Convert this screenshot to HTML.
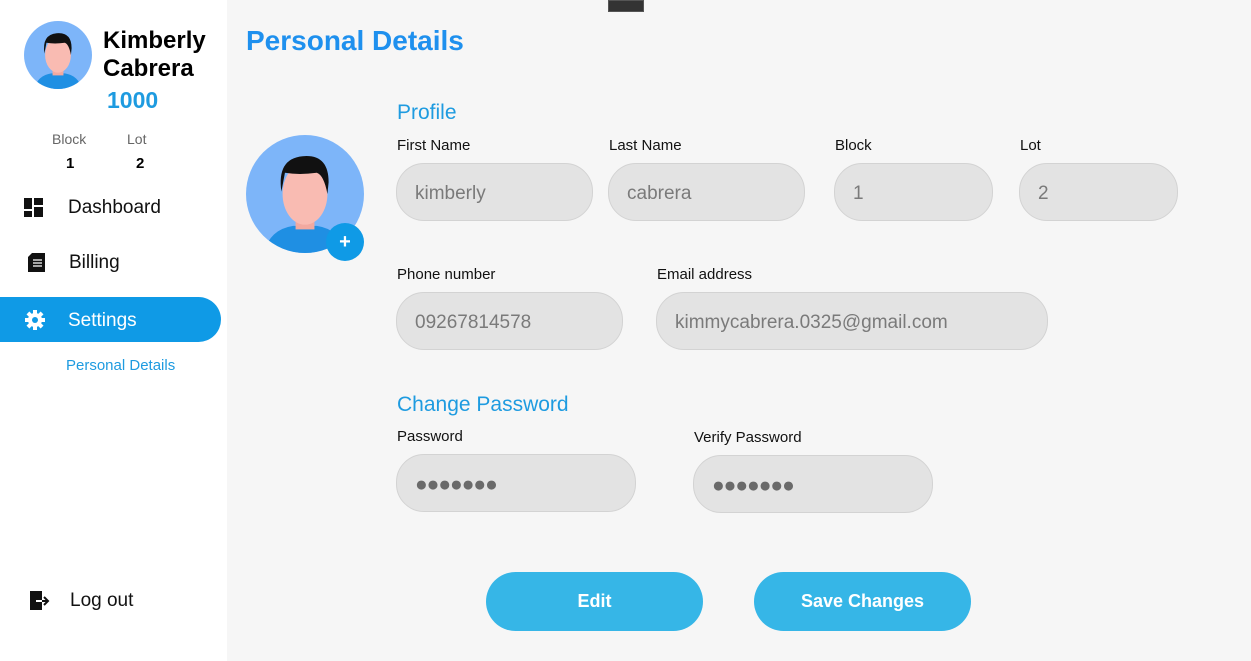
<!DOCTYPE html>
<html><head><meta charset="utf-8"><style>
*{margin:0;padding:0;box-sizing:border-box}
body{width:1251px;height:661px;overflow:hidden;background:#f6f6f6;font-family:"Liberation Sans",sans-serif;position:relative}
.side{position:absolute;left:0;top:0;width:227px;height:661px;background:#fff}
.a{position:absolute}
.inp{position:absolute;background:#e3e3e3;border:1px solid #d3d3d3;border-radius:28px;color:#7a7a7a;font-size:19px;padding-left:18px;padding-top:3px;display:flex;align-items:center}
.lbl{position:absolute;font-size:15px;color:#111}
.btn{position:absolute;background:#36b6e7;border-radius:30px;color:#fff;font-weight:bold;font-size:18px;display:flex;align-items:center;justify-content:center;width:217px;height:59px;top:572px}
.nav{position:absolute;font-size:19px;color:#111}
.dots{letter-spacing:-1px;color:#6a6a6a;font-size:21px}
</style></head><body>
<div class="side">
<svg class="a" style="left:24px;top:21px" width="68" height="68" viewBox="0 0 100 100"><defs><clipPath id="c1"><circle cx="50" cy="50" r="50"/></clipPath></defs><circle cx="50" cy="50" r="50" fill="#7db5f9"/><g clip-path="url(#c1)"><path d="M15 100 Q20 80 40 77 L60 77 Q80 80 85 100Z" fill="#1f8fe3"/><rect x="42" y="62" width="16" height="18" fill="#f2a9a0"/><ellipse cx="50" cy="50" rx="19" ry="26" fill="#f9bbb2"/><path d="M30 48 Q26 20 48 18 Q70 16 70 40 L69 50 Q66 34 60 32 Q45 34 33 32Z" fill="#111"/></g></svg>
<div class="a" style="left:103px;top:27px;font-size:24px;font-weight:bold;line-height:28px;color:#000">Kimberly<br>Cabrera</div>
<div class="a" style="left:107px;top:87px;font-size:23px;font-weight:bold;color:#1e9be0">1000</div>
<div class="a" style="left:52px;top:131px;font-size:14px;color:#666">Block</div>
<div class="a" style="left:127px;top:131px;font-size:14px;color:#666">Lot</div>
<div class="a" style="left:66px;top:155px;font-size:15px;font-weight:bold">1</div>
<div class="a" style="left:136px;top:155px;font-size:15px;font-weight:bold">2</div>
<svg class="a" style="left:24px;top:198px" width="19" height="19"><rect x="0" y="0" width="8" height="11" fill="#111"/><rect x="10" y="0" width="9" height="7" fill="#111"/><rect x="0" y="13" width="8" height="6" fill="#111"/><rect x="10" y="9" width="9" height="10" fill="#111"/></svg>
<div class="nav" style="left:68px;top:197px">Dashboard</div>
<svg class="a" style="left:27px;top:253px" width="19" height="19"><path d="M5 0H18V19H1V4Z" fill="#111"/><path d="M6 7h9M6 10h9M6 13h9" stroke="#fff" stroke-width="1.2"/></svg>
<div class="nav" style="left:69px;top:252px">Billing</div>
<div class="a" style="left:0;top:297px;width:221px;height:45px;background:#0f9ae6;border-radius:0 23px 23px 0"></div>
<svg class="a" style="left:25px;top:310px" width="20" height="20" viewBox="0 0 20 20"><g fill="#fff"><circle cx="10" cy="10" r="7"/><rect x="8" y="0" width="4" height="20"/><rect x="0" y="8" width="20" height="4"/><rect x="8" y="0" width="4" height="20" transform="rotate(45 10 10)"/><rect x="8" y="0" width="4" height="20" transform="rotate(-45 10 10)"/></g><circle cx="10" cy="10" r="3" fill="#0f9ae6"/></svg>
<div class="nav" style="left:68px;top:310px;color:#fff">Settings</div>
<div class="a" style="left:66px;top:357px;font-size:15px;color:#1e9be0">Personal Details</div>
<svg class="a" style="left:30px;top:591px" width="20" height="20"><rect x="0" y="0" width="12" height="19" fill="#111"/><path d="M8 10h10M14 6l4 4-4 4" stroke="#111" stroke-width="2" fill="none"/><path d="M6 10h6" stroke="#fff" stroke-width="2"/></svg>
<div class="nav" style="left:70px;top:590px">Log out</div>
</div>
<div class="a" style="left:608px;top:0;width:36px;height:12px;background:#333;border:1px solid #555"></div>
<div class="a" style="left:246px;top:25px;font-size:28px;font-weight:bold;color:#1e90ee">Personal Details</div>
<svg class="a" style="left:246px;top:135px" width="118" height="118" viewBox="0 0 100 100"><defs><clipPath id="c2"><circle cx="50" cy="50" r="50"/></clipPath></defs><circle cx="50" cy="50" r="50" fill="#7db5f9"/><g clip-path="url(#c2)"><path d="M15 100 Q20 80 40 77 L60 77 Q80 80 85 100Z" fill="#1f8fe3"/><rect x="42" y="62" width="16" height="18" fill="#f2a9a0"/><ellipse cx="50" cy="50" rx="19" ry="26" fill="#f9bbb2"/><path d="M30 48 Q26 20 48 18 Q70 16 70 40 L69 50 Q66 34 60 32 Q45 34 33 32Z" fill="#111"/></g></svg>
<div class="a" style="left:326px;top:223px;width:38px;height:38px;border-radius:50%;background:#0f9ae6;color:#fff;font-size:20px;font-weight:bold;text-align:center;line-height:38px">+</div>
<div class="a" style="left:397px;top:101px;font-size:21px;color:#1e9be0">Profile</div>
<div class="lbl" style="left:397px;top:137px">First Name</div>
<div class="lbl" style="left:609px;top:137px">Last Name</div>
<div class="lbl" style="left:835px;top:137px">Block</div>
<div class="lbl" style="left:1020px;top:137px">Lot</div>
<div class="inp" style="left:396px;top:163px;width:197px;height:58px">kimberly</div>
<div class="inp" style="left:608px;top:163px;width:197px;height:58px">cabrera</div>
<div class="inp" style="left:834px;top:163px;width:159px;height:58px">1</div>
<div class="inp" style="left:1019px;top:163px;width:159px;height:58px">2</div>
<div class="lbl" style="left:397px;top:266px">Phone number</div>
<div class="lbl" style="left:657px;top:266px">Email address</div>
<div class="inp" style="left:396px;top:292px;width:227px;height:58px">09267814578</div>
<div class="inp" style="left:656px;top:292px;width:392px;height:58px">kimmycabrera.0325@gmail.com</div>
<div class="a" style="left:397px;top:393px;font-size:21px;color:#1e9be0">Change Password</div>
<div class="lbl" style="left:397px;top:428px">Password</div>
<div class="lbl" style="left:694px;top:429px">Verify Password</div>
<div class="inp dots" style="left:396px;top:454px;width:240px;height:58px">●●●●●●●</div>
<div class="inp dots" style="left:693px;top:455px;width:240px;height:58px">●●●●●●●</div>
<div class="btn" style="left:486px">Edit</div>
<div class="btn" style="left:754px">Save Changes</div>
</body></html>
